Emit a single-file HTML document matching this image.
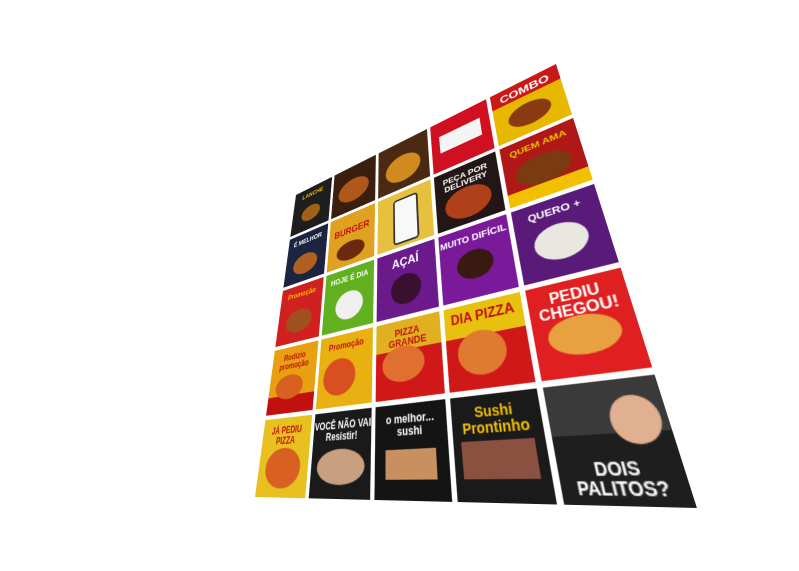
<!DOCTYPE html>
<html><head><meta charset="utf-8"><style>
html,body{margin:0;padding:0;background:#fff;width:799px;height:571px;overflow:hidden}
#g{position:absolute;left:0;top:0;width:500px;height:500px;transform-origin:0 0;display:grid;grid-template-columns:repeat(5,1fr);grid-template-rows:repeat(5,1fr);gap:6px;font-family:"Liberation Sans",sans-serif}
.t{position:relative;overflow:hidden;color:#fff;font-weight:bold;text-align:center}
.t span{position:absolute;left:0;right:0;top:10%;font-size:13px;line-height:1}
.c{position:absolute;border-radius:50%}
</style></head><body>
<div id="g">
<div class="t" style="background:#1e1e1e"><span style="color:#f2c000">LANCHE</span><div class="c" style="left:25%;top:45%;width:50%;height:35%;background:#a0601a"></div></div>
<div class="t" style="background:#3a1e0e"><div class="c" style="left:15%;top:30%;width:70%;height:50%;background:#b0581a"></div></div>
<div class="t" style="background:#4a2a12"><div class="c" style="left:15%;top:30%;width:70%;height:55%;background:#d08a20"></div></div>
<div class="t" style="background:#d01020"><div style="position:absolute;left:15%;top:30%;width:70%;height:35%;background:#f4f4f4"></div></div>
<div class="t" style="background:#e8b800"><div style="position:absolute;left:0;top:0;right:0;height:30%;background:#c81818"></div><span style="color:#fff;font-size:18px;top:8%">COMBO</span><div class="c" style="left:20%;top:45%;width:60%;height:40%;background:#8a3a10"></div></div>

<div class="t" style="background:#1c2440"><span>É MELHOR</span><div class="c" style="left:20%;top:45%;width:60%;height:40%;background:#b06020"></div></div>
<div class="t" style="background:#e0a020"><span style="color:#c01010;font-size:17px;top:25%">BURGER</span><div class="c" style="left:20%;top:55%;width:60%;height:35%;background:#6a2a10"></div></div>
<div class="t" style="background:#e8c040"><div style="position:absolute;left:30%;top:12%;width:40%;height:76%;background:#f8f8f8;border-radius:6px;border:3px solid #333"></div></div>
<div class="t" style="background:#231616"><span>PEÇA POR DELIVERY</span><div class="c" style="left:15%;top:40%;width:70%;height:50%;background:#b0401a"></div></div>
<div class="t" style="background:#b01818"><span style="color:#f2c000">QUEM AMA</span><div class="c" style="left:15%;top:35%;width:70%;height:45%;background:#7a3a12"></div><div style="position:absolute;left:0;right:0;bottom:0;height:20%;background:#f2c000"></div></div>

<div class="t" style="background:#d02020"><span style="color:#f2c000">Promoção</span><div class="c" style="left:20%;top:45%;width:60%;height:40%;background:#a05020"></div></div>
<div class="t" style="background:#60b020"><span>HOJE É DIA</span><div class="c" style="left:25%;top:40%;width:55%;height:45%;background:#f0f0f0"></div></div>
<div class="t" style="background:#6a1a8a"><span style="font-size:18px">AÇAÍ</span><div class="c" style="left:25%;top:40%;width:50%;height:45%;background:#3a1030"></div></div>
<div class="t" style="background:#7a1a9a"><span>MUITO DIFÍCIL</span><div class="c" style="left:25%;top:35%;width:50%;height:40%;background:#3a1a10"></div></div>
<div class="t" style="background:#5a1a7a"><span>QUERO +</span><div class="c" style="left:20%;top:35%;width:60%;height:45%;background:#e8e8e0"></div></div>

<div class="t" style="background:#e8a010"><span style="color:#c01010">Rodízio promoção</span><div style="position:absolute;left:0;right:0;bottom:0;height:25%;background:#c01010"></div><div class="c" style="left:15%;top:45%;width:60%;height:35%;background:#d86020"></div></div>
<div class="t" style="background:#e8b010"><span style="color:#c01010">Promoção</span><div class="c" style="left:10%;top:35%;width:60%;height:50%;background:#d85020"></div></div>
<div class="t" style="background:#e0b020"><span style="color:#c01010">PIZZA GRANDE</span><div style="position:absolute;left:0;right:0;top:40%;height:60%;background:#d01818"></div><div class="c" style="left:10%;top:35%;width:65%;height:45%;background:#e07030"></div></div>
<div class="t" style="background:#e8c010"><span style="color:#c01010;font-size:16px">DIA PIZZA</span><div style="position:absolute;left:0;right:0;top:40%;height:60%;background:#d01818"></div><div class="c" style="left:15%;top:35%;width:60%;height:50%;background:#e07a30"></div></div>
<div class="t" style="background:#e02020"><span style="font-size:16px">PEDIU CHEGOU!</span><div class="c" style="left:15%;top:40%;width:70%;height:40%;background:#e8a040"></div></div>

<div class="t" style="background:#e8c020"><span style="color:#c01010">JÁ PEDIU PIZZA</span><div class="c" style="left:15%;top:40%;width:70%;height:50%;background:#d86020"></div></div>
<div class="t" style="background:#1a1a1a"><span>VOCÊ NÃO VAI Resistir!</span><div class="c" style="left:10%;top:45%;width:80%;height:40%;background:#c8a080"></div></div>
<div class="t" style="background:#141414"><span>o melhor... sushi</span><div style="position:absolute;left:15%;top:50%;width:70%;height:30%;background:#c89060"></div></div>
<div class="t" style="background:#1a1a1a"><span style="color:#f2c000;font-size:15px">Sushi Prontinho</span><div style="position:absolute;left:10%;top:45%;width:80%;height:35%;background:#8a5040"></div></div>
<div class="t" style="background:#1e1e1e"><div style="position:absolute;left:0;right:0;top:0;height:45%;background:#3a3a3a"></div><span style="top:65%;font-size:14px">DOIS PALITOS?</span><div class="c" style="left:55%;top:15%;width:40%;height:40%;background:#e0b090"></div></div>
</div>
<script>
function hom(s,d){var A=[],b=[];for(var i=0;i<4;i++){var x=s[i][0],y=s[i][1],u=d[i][0],v=d[i][1];A.push([x,y,1,0,0,0,-u*x,-u*y]);b.push(u);A.push([0,0,0,x,y,1,-v*x,-v*y]);b.push(v);}
var n=8;for(var c=0;c<n;c++){var p=c;for(var r=c+1;r<n;r++)if(Math.abs(A[r][c])>Math.abs(A[p][c]))p=r;var t=A[c];A[c]=A[p];A[p]=t;t=b[c];b[c]=b[p];b[p]=t;for(var r=0;r<n;r++){if(r==c)continue;var f=A[r][c]/A[c][c];for(var k=c;k<n;k++)A[r][k]-=f*A[c][k];b[r]-=f*b[c];}}
var h=[];for(var i=0;i<n;i++)h.push(b[i]/A[i][i]);return h;}
var h=hom([[0,0],[500,0],[500,500],[0,500]],[[296,195],[556,64],[697,508],[255,497]]);
document.getElementById('g').style.transform='matrix3d('+[h[0],h[3],0,h[6],h[1],h[4],0,h[7],0,0,1,0,h[2],h[5],0,1].join(',')+')';
</script>
</body></html>
